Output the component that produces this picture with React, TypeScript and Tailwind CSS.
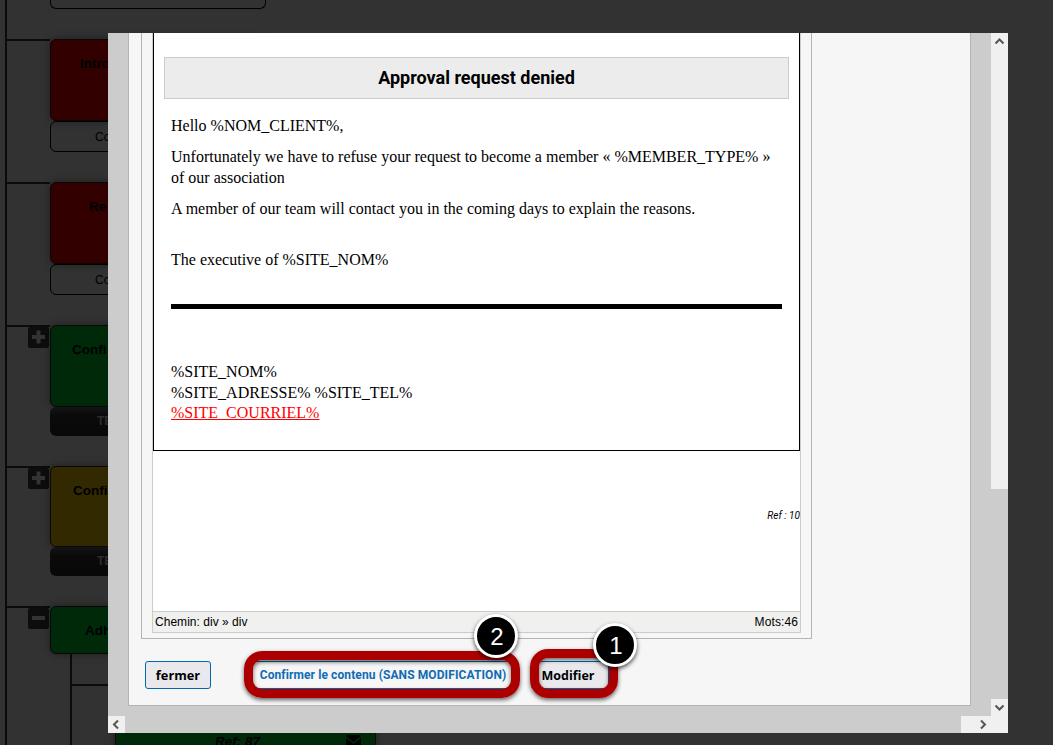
import React from 'react';
import clsx from 'clsx';

interface TreeNode {
  title: string;
  footer?: string;
  color: string;
  rowHeight: string;
  boxHeight: string;
  titlePadding: string;
  toggle?: 'plus' | 'minus';
  darkFooter?: boolean;
}

const nodes: TreeNode[] = [
  { title: 'Intro', footer: 'Co', color: 'bg-[#330000]', rowHeight: 'h-[143px]', boxHeight: 'h-[82px]', titlePadding: 'pl-[29px] pt-[14px]' },
  { title: 'Re', footer: 'Co', color: 'bg-[#330000]', rowHeight: 'h-[143px]', boxHeight: 'h-[82px]', titlePadding: 'pl-[38px] pt-[14px]' },
  { title: 'Confi', footer: 'TE', color: 'bg-[#00290a]', rowHeight: 'h-[141px]', boxHeight: 'h-[82px]', titlePadding: 'pl-[21px] pt-[14px]', toggle: 'plus', darkFooter: true },
  { title: 'Confi', footer: 'TE', color: 'bg-[#332900]', rowHeight: 'h-[140px]', boxHeight: 'h-[81px]', titlePadding: 'pl-[22px] pt-[14px]', toggle: 'plus', darkFooter: true },
  { title: 'Adh', color: 'bg-[#00290a]', rowHeight: 'h-[48px]', boxHeight: 'h-[48px]', titlePadding: 'pl-[34px] pt-[14px]', toggle: 'minus' },
];

const TreeToggle: React.FC<{ kind: 'plus' | 'minus' }> = ({ kind }) => (
  <svg className="h-[21px] w-[21px]" viewBox="0 0 21 21">
    <rect width="21" height="21" rx="2" fill="#0d0d0d" />
    <path d={kind === 'plus' ? 'M4 10H17M10.5 3.5V16.5' : 'M4 10H17'} stroke="#333" strokeWidth="4" />
  </svg>
);

const TreeRow: React.FC<{ node: TreeNode }> = ({ node }) => (
  <div className={clsx('flex', node.rowHeight)}>
    <div className="flex w-[43px] shrink-0 justify-end border-t-2 border-[#0b0b0b] pr-px">
      {node.toggle && <TreeToggle kind={node.toggle} />}
    </div>
    <div className="w-[216px]">
      <div
        className={clsx(
          'rounded-[6px] border border-[#080808] text-[13.5px] leading-[19px] font-bold text-black shadow-[0_0_8px_rgba(0,0,0,0.4)]',
          node.color,
          node.boxHeight,
          node.titlePadding
        )}
      >
        {node.title}
      </div>
      {node.footer && (
        <div
          className={clsx(
            'rounded-[6px] text-[12px]',
            node.darkFooter
              ? 'h-[29px] bg-linear-to-b from-[#141414] via-[#0a0a0a] via-30% to-[#080808] pl-[47px] leading-[28px] font-bold text-[#2c2c2c]'
              : 'h-[31px] border border-black pl-[44px] leading-[30px] text-black'
          )}
        >
          {node.footer}
        </div>
      )}
    </div>
  </div>
);

const ProcessTree: React.FC = () => (
  <div className="flex h-[745px] pl-[5px]">
    <div className="w-[700px] border-l-2 border-[#0b0b0b]">
      <div className="flex h-[39px] pl-[43px]">
        <div className="h-[9px] w-[216px] rounded-b-[6px] border border-t-0 border-black" />
      </div>
      {nodes.map((node, index) => (
        <TreeRow key={index} node={node} />
      ))}
      <div className="ml-[63px] h-[91px] border-l-2 border-[#0b0b0b] pt-[30px]">
        <div className="w-[60px] border-t-2 border-[#0b0b0b]" />
        <div className="ml-[43px] flex h-[70px] w-[261px] items-start border border-[#0b0b0b] bg-[#00290a] pt-[48px] pl-[99px] text-black shadow-[0_0_8px_rgba(0,0,0,0.4)]">
          <span className="mt-px text-[13.5px] leading-[12px] font-bold italic">Ref: 87</span>
          <svg className="ml-[86px] h-[12px] w-[15px]" viewBox="0 0 15 12">
            <path d="M1 0H14L15 1L7.500 7L0 1ZM0 3L7.500 9L15 3V12H0Z" fill="#000" />
          </svg>
        </div>
      </div>
    </div>
  </div>
);

const Arrow: React.FC<{ d: string }> = ({ d }) => (
  <svg className="h-[17px] w-[17px] shrink-0" viewBox="0 0 17 17">
    <path d={d} fill="none" stroke="#555" strokeWidth="2" />
  </svg>
);

const EmailPreview: React.FC = () => (
  <div className="h-[418px] w-[647px] border border-t-0 border-black px-[10px] pt-[24px] font-['Liberation_Serif',serif] text-[16px] leading-[21px] text-black">
    <h1 className="h-[42px] w-[625px] border border-[#ccc] bg-[#ececec] text-center font-[Roboto,sans-serif] text-[18px] leading-[40px] font-bold">
      Approval request denied
    </h1>
    <div className="px-[7px] pt-[16px]">
      <p>Hello %NOM_CLIENT%,</p>
      <p className="mt-[10px]">
        Unfortunately we have to refuse your request to become a member « %MEMBER_TYPE% »<br />
        of our association
      </p>
      <p className="mt-[10px] whitespace-nowrap">A member of our team will contact you in the coming days to explain the reasons.</p>
      <p className="mt-[30px]">The executive of %SITE_NOM%</p>
      <hr className="mt-[34px] w-[611px] border-0 border-t-5 border-black" />
      <p className="mt-[52px]">
        %SITE_NOM%
        <br />
        %SITE_ADRESSE% %SITE_TEL%
      </p>
      <p className="leading-[20px] text-[#f00] underline">%SITE_COURRIEL%</p>
    </div>
  </div>
);

const Editor: React.FC = () => (
  <div className="ml-[12px] h-[606px] w-[671px] border border-t-0 border-[#b4b4b4] pl-[10px]">
    <div className="h-[600px] w-[649px] border border-t-0 border-[#ccc] bg-white">
      <div className="h-[578px]">
        <EmailPreview />
        <p className="mt-[58px] text-right font-[Roboto,sans-serif] text-[10px] leading-[14px] text-black italic">Ref : 10</p>
      </div>
      <div className="flex h-[21px] justify-between border-t border-[#ccc] bg-[#f0f0ee] px-[2px] text-[12px] leading-[20px] text-black">
        <span className="tracking-[0.03px]">Chemin: div » div</span>
        <span className="tracking-[0.1px]">Mots:46</span>
      </div>
    </div>
  </div>
);

const Callout: React.FC<{ label: string; frame: string; badge: string }> = ({ label, frame, badge }) => (
  <>
    <div
      className={clsx(
        'absolute rounded-[18px] border-[9px] border-[#ac0000] shadow-[0_2px_4px_rgba(0,0,0,0.6),inset_0_2px_4px_rgba(0,0,0,0.6)]',
        frame
      )}
    />
    <div
      className={clsx(
        'absolute flex h-[44px] w-[44px] items-center justify-center rounded-full border-[3px] border-white bg-black pt-[2px] pl-[2px] text-[24px] leading-none text-white shadow-[0_2px_4px_rgba(0,0,0,0.7)]',
        badge
      )}
    >
      {label}
    </div>
  </>
);

const Modal: React.FC = () => (
  <div className="absolute top-[33px] left-[108px] grid h-[700px] w-[900px] grid-cols-[883px_17px] grid-rows-[683px_17px] bg-[#ccc]">
    <div className="pl-[20px]">
      <div className="h-[673px] w-[843px] border border-t-0 border-[#b4b4b4] bg-[#f6f6f6]">
        <Editor />
        <div className="flex pt-[22px] pl-[16px] font-['Open_Sans',sans-serif] text-[13px] font-bold text-black">
          <button className="h-[28px] w-[66px] rounded-[3px] border border-[#0068b3] bg-[#e9e9ed] text-[12.800px] leading-[26px]">fermer</button>
          <button className="ml-[37px] h-[28px] w-[268px] rounded-[3px] border border-[#0068b3] bg-[#f6f6f6] pl-[2px] font-[Roboto,sans-serif] text-[12px] tracking-[0.1px] whitespace-nowrap text-[#0f6cb4]">
            Confirmer le contenu (SANS MODIFICATION)
          </button>
          <button className="ml-[15px] h-[28px] w-[78px] rounded-[3px] border border-[#0068b3] bg-[#e9e9ed] pt-[2px] pr-[4px] text-[12.500px] leading-[24px]">
            Modifier
          </button>
        </div>
      </div>
    </div>
    <div className="flex flex-col justify-between bg-[#ccc]">
      <div className="h-[456px] bg-[#f0f0f0]">
        <Arrow d="M4.500 10.500L8.500 6.500L12.500 10.500" />
      </div>
      <div className="h-[17px] bg-[#f0f0f0]">
        <Arrow d="M4.500 6.500L8.500 10.500L12.500 6.500" />
      </div>
    </div>
    <div className="flex justify-between">
      <div className="w-[17px] bg-[#f0f0f0]">
        <Arrow d="M10 4.500L6 8.500L10 12.500" />
      </div>
      <div className="flex w-[30px] justify-end bg-[#f0f0f0]">
        <Arrow d="M7 4.500L11 8.500L7 12.500" />
      </div>
    </div>
    <div className="bg-[#f0f0f0]" />
  </div>
);

export default function App() {
  return (
    <div className="relative h-[745px] w-[1053px] overflow-hidden bg-[#323232] font-['Liberation_Sans',Arial,sans-serif]">
      <ProcessTree />
      <Modal />
      <Callout label="2" frame="left-[244px] top-[651px] h-[47px] w-[276px]" badge="left-[474px] top-[614px]" />
      <Callout label="1" frame="left-[530px] top-[649px] h-[49px] w-[88px]" badge="left-[593px] top-[623px]" />
    </div>
  );
}
